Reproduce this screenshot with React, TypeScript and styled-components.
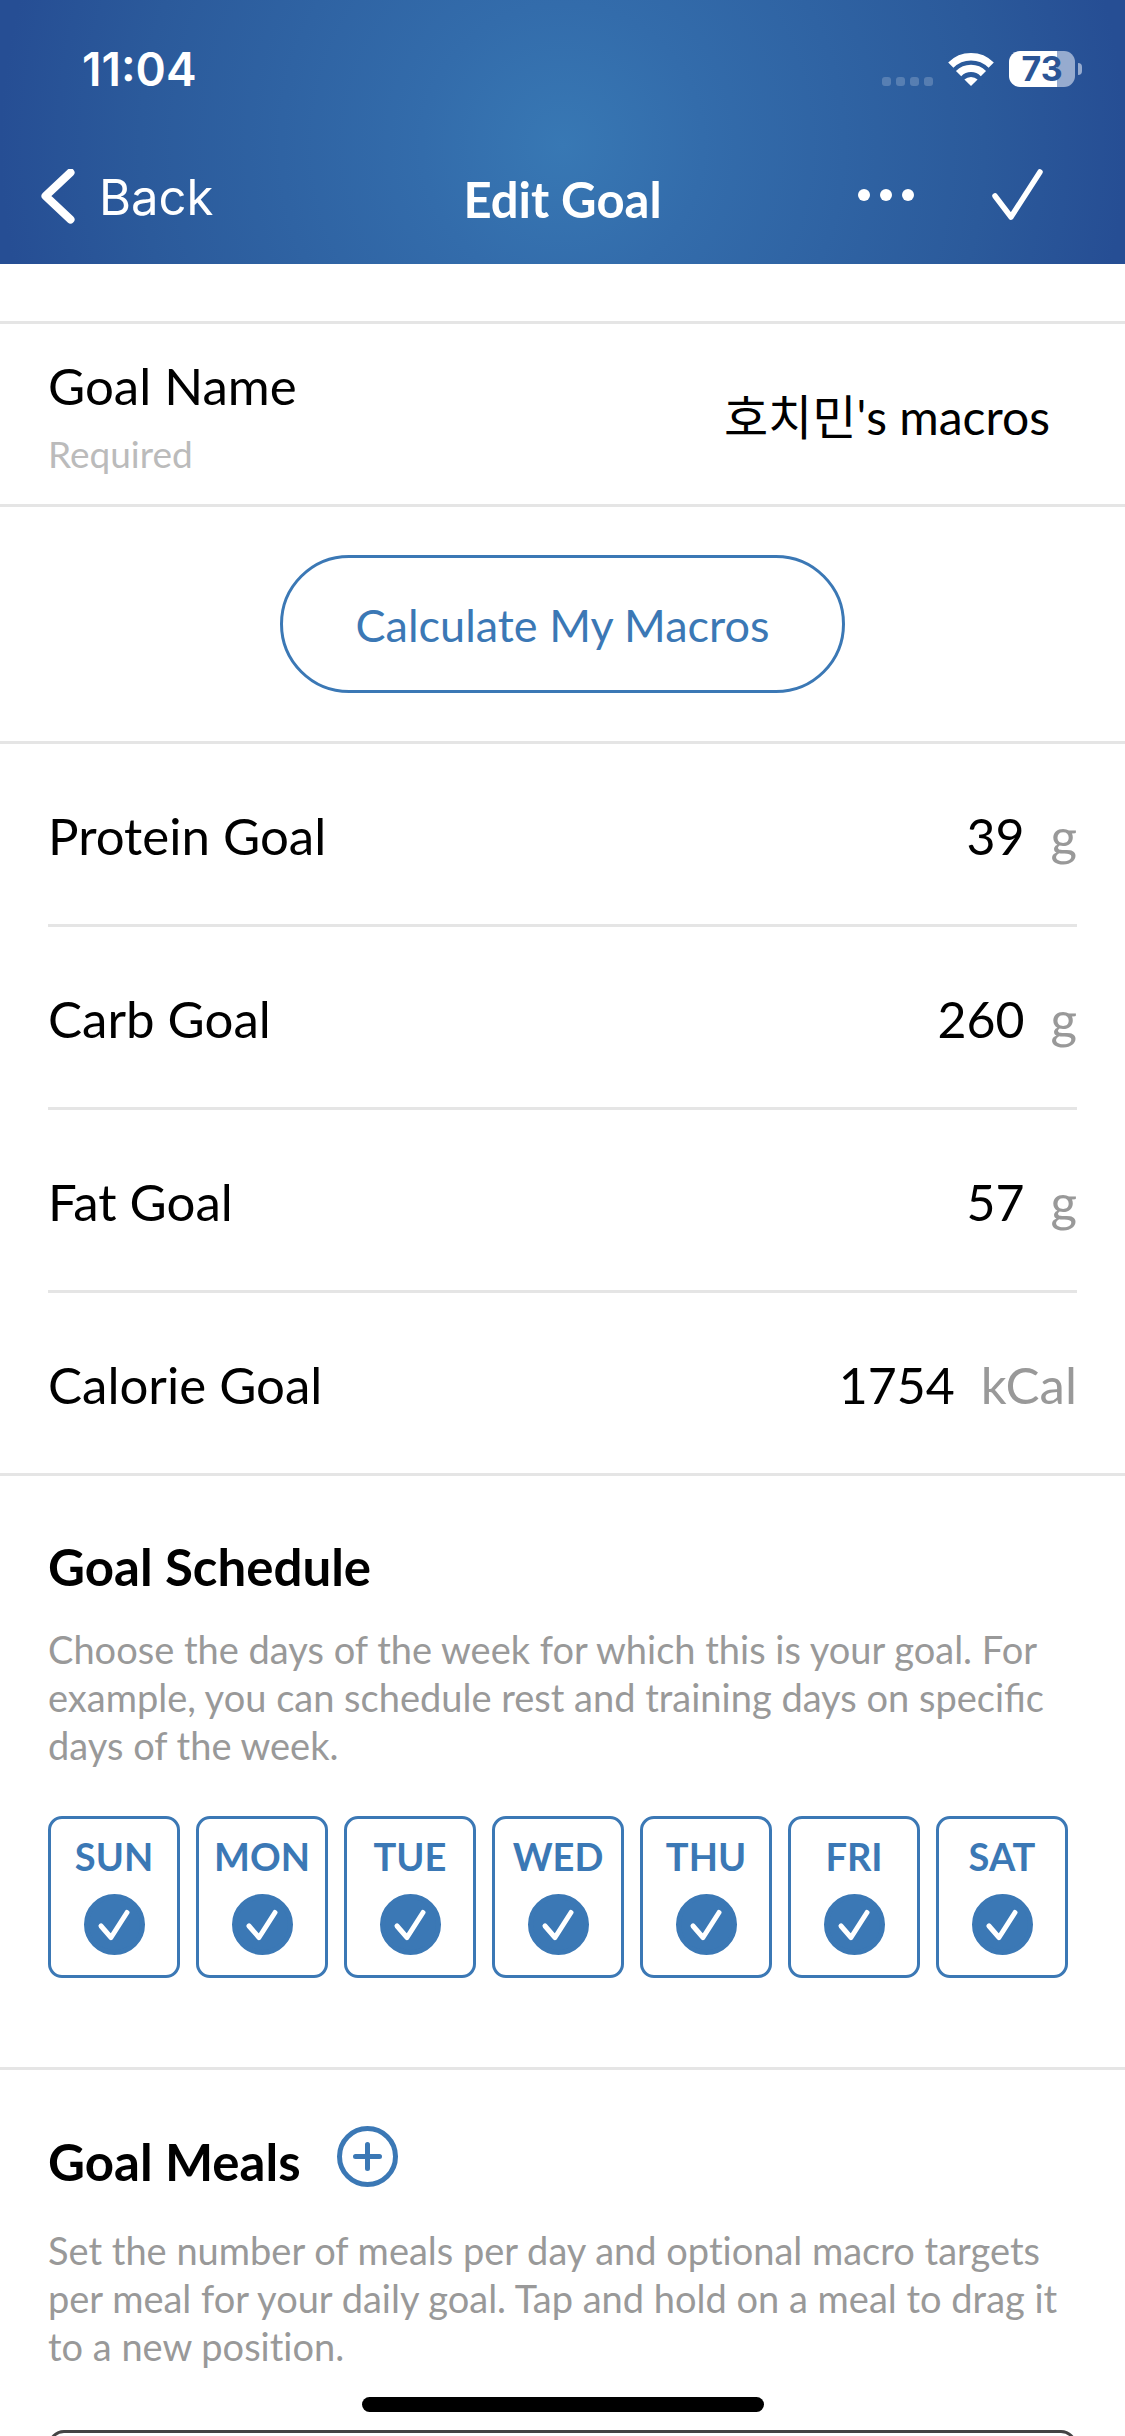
import React, { useState } from "react";
import styled, { createGlobalStyle } from "styled-components";

const blue = "#3b78b5";
const line = "#e5e5e5";
const gray = "#999999";

const GlobalStyle = createGlobalStyle`
  *, *::before, *::after { box-sizing: border-box; }
  body {
    margin: 0;
    background: #ffffff;
    color: #000000;
    font-family: Lato, "Noto Sans CJK KR", sans-serif;
    font-size: 51px;
    line-height: 60px;
  }
  button, input { font: inherit; color: inherit; margin: 0; padding: 0; border: 0; background: none; }
  h1, h2, p { margin: 0; }
`;

const Screen = styled.div`
  display: flex;
  flex-direction: column;
  height: 100vh;
  overflow: hidden;
`;

const Header = styled.header`
  flex: none;
  color: #ffffff;
  background: radial-gradient(
    circle farthest-side at 50% 55%,
    #3878b4 0%,
    #336cab 25%,
    #2f63a3 50%,
    #2b5a9b 75%,
    #264e94 100%
  );
`;

const StatusBar = styled.div`
  display: flex;
  align-items: center;
  justify-content: space-between;
  height: 132px;
  padding: 6px 43px 0 82px;
`;

const Time = styled.span`
  font-family: Inter, sans-serif;
  font-size: 46px;
  font-weight: 600;
`;

const StatusIcons = styled.div`
  display: flex;
  align-items: center;
`;

const CellDots = styled.svg`
  width: 51px;
  height: 33px;
  margin-right: 15px;
`;

const Wifi = styled.svg`
  width: 46px;
  height: 33px;
  margin-right: 15px;
`;

const Battery = styled.div`
  display: flex;
  align-items: center;
  gap: 3px;
`;

const BatteryBody = styled.div<{ $level: number }>`
  width: 66px;
  height: 36px;
  border-radius: 11px;
  background: linear-gradient(to right, #ffffff ${(p) => p.$level}%, #96abcf ${(p) => p.$level}%);
  color: #2b5596;
  font-family: Inter, sans-serif;
  font-size: 34px;
  font-weight: 700;
  line-height: 36px;
  text-align: center;
`;

const BatteryTip = styled.div`
  width: 4px;
  height: 12px;
  border-radius: 0 4px 4px 0;
  background: #96abcf;
`;

const NavBar = styled.nav`
  display: grid;
  grid-template-columns: 1fr auto 1fr;
  align-items: center;
  height: 132px;
  padding: 0 80px 0 40px;
`;

const NavTitle = styled.h1`
  padding: 2px 0 0 40px;
  font-size: 49px;
  font-weight: 700;
`;

const BackButton = styled.button`
  display: flex;
  align-items: center;
  justify-self: start;
  gap: 23px;
  font-family: Inter, sans-serif;
  font-size: 49px;
  font-weight: 400;
`;

const BackIcon = styled.svg`
  width: 36px;
  height: 58px;
`;

const NavActions = styled.div`
  display: flex;
  align-items: center;
  justify-self: end;
  gap: 76px;
  padding-bottom: 6px;
`;

const IconButton = styled.button`
  display: flex;
`;

const MoreIcon = styled.svg`
  width: 58px;
  height: 14px;
`;

const DoneIcon = styled.svg`
  width: 54px;
  height: 54px;
`;

const Content = styled.main`
  flex: 1;
  min-height: 0;
  overflow: hidden;
  padding-top: 57px;
`;

const NameRow = styled.section`
  display: flex;
  align-items: center;
  height: 186px;
  padding: 0 75px 0 48px;
  border-top: 3px solid ${line};
  border-bottom: 3px solid ${line};
`;

const NameLabel = styled.label`
  display: flex;
  flex-direction: column;
  gap: 16px;
  padding-top: 3px;
`;

const Required = styled.small`
  color: #bbbbbb;
  font-size: 37px;
  line-height: 44px;
`;

const TextInput = styled.input`
  flex: 1;
  min-width: 0;
  height: 72px;
  text-align: right;
  outline: none;
`;

const NameInput = styled(TextInput)`
  font-size: 48px;
`;

const CalculateRow = styled.section`
  display: flex;
  justify-content: center;
  padding: 48px;
  border-bottom: 3px solid ${line};
`;

const PillButton = styled.button`
  height: 138px;
  padding: 2px 73px 0;
  border: 3px solid ${blue};
  border-radius: 69px;
  color: ${blue};
  font-size: 45px;
`;

const GoalList = styled.section`
  padding: 0 48px;
  border-bottom: 3px solid ${line};
`;

const GoalRow = styled.div`
  display: flex;
  align-items: center;
  height: 183px;
  padding-top: 4px;
  border-bottom: 3px solid ${line};

  &:last-child {
    height: 180px;
    border-bottom: 0;
  }
`;

const GoalInput = styled(TextInput)`
  font-size: 50px;
`;

const Unit = styled.span`
  margin-left: 26px;
  color: ${gray};
`;

const Schedule = styled.section`
  padding: 61px 48px 89px;
  border-bottom: 3px solid ${line};
`;

const Meals = styled.section`
  padding: 56px 48px 0;
`;

const SectionTitle = styled.h2`
  font-size: 51px;
  font-weight: 700;
`;

const Hint = styled.p<{ $gap: number; $ligatures?: boolean }>`
  margin-top: ${(p) => p.$gap}px;
  color: ${gray};
  font-size: 38px;
  line-height: 48px;
  font-variant-ligatures: ${(p) => (p.$ligatures ? "normal" : "none")};
`;

const Days = styled.div`
  display: flex;
  gap: 16px;
  margin-top: 47px;
`;

const Day = styled.label`
  display: flex;
  flex-direction: column;
  align-items: center;
  justify-content: space-between;
  width: 132px;
  height: 162px;
  padding: 13px 0 20px;
  border: 3px solid ${blue};
  border-radius: 14px;
  color: ${blue};
  font-size: 38px;
  font-weight: 700;
  line-height: 48px;
`;

const Tick = styled.span`
  display: grid;
  width: 61px;
  height: 61px;

  > * { grid-area: 1 / 1; }
`;

const TickBox = styled.input`
  width: 61px;
  height: 61px;
  border: 5px solid ${blue};
  border-radius: 50%;
  appearance: none;

  &:checked { background: ${blue}; }
`;

const TickMark = styled.svg`
  width: 61px;
  height: 61px;
  pointer-events: none;
`;

const MealsHead = styled.div`
  display: flex;
  align-items: flex-end;
  gap: 36px;
  height: 66px;
`;

const AddButton = styled.button`
  display: flex;
  align-self: flex-start;
`;

const AddIcon = styled.svg`
  width: 61px;
  height: 61px;
`;

const MealCard = styled.div`
  height: 180px;
  margin-top: 60px;
  border: 3px solid #444444;
  border-radius: 16px;
`;

const HomeIndicator = styled.div`
  position: fixed;
  bottom: 24px;
  left: 50%;
  width: 402px;
  height: 15px;
  margin-left: -201px;
  border-radius: 8px;
  background: #000000;
`;

const goals = [
  { id: "protein", label: "Protein Goal", value: "39", unit: "g" },
  { id: "carb", label: "Carb Goal", value: "260", unit: "g" },
  { id: "fat", label: "Fat Goal", value: "57", unit: "g" },
  { id: "calorie", label: "Calorie Goal", value: "1754", unit: "kCal" },
];

const days = ["SUN", "MON", "TUE", "WED", "THU", "FRI", "SAT"];

function DayToggle({ name }: { name: string }) {
  const [on, setOn] = useState(true);
  return (
    <Day>
      {name}
      <Tick>
        <TickBox type="checkbox" checked={on} onChange={() => setOn(!on)} />
        {on && (
          <TickMark viewBox="0 0 61 61" fill="none" stroke="#fff" strokeWidth="5" strokeLinecap="round" strokeLinejoin="round">
            <path d="M17 32 L27 43.5 L43 18.5" />
          </TickMark>
        )}
      </Tick>
    </Day>
  );
}

export default function App() {
  return (
    <Screen>
      <GlobalStyle />
      <Header>
        <StatusBar>
          <Time>11:04</Time>
          <StatusIcons>
            <CellDots viewBox="0 0 51 33" fill="#fff" fillOpacity="0.2">
              <rect x="0" y="24" width="9" height="9" rx="3" />
              <rect x="14" y="24" width="9" height="9" rx="3" />
              <rect x="28" y="24" width="9" height="9" rx="3" />
              <rect x="42" y="24" width="9" height="9" rx="3" />
            </CellDots>
            <Wifi viewBox="0 0 46 33" fill="none" stroke="#fff" strokeWidth="7.4">
              <path d="M2.8 12.2 A28.5 28.5 0 0 1 43.2 12.2" />
              <path d="M10.6 20.6 A17.4 17.4 0 0 1 35.4 20.6" />
              <path d="M23 33 L16.4 26.6 A9.4 9.4 0 0 1 29.6 26.6 Z" fill="#fff" stroke="none" />
            </Wifi>
            <Battery>
              <BatteryBody $level={73}>73</BatteryBody>
              <BatteryTip />
            </Battery>
          </StatusIcons>
        </StatusBar>
        <NavBar>
          <BackButton type="button">
            <BackIcon viewBox="0 0 36 58" fill="none" stroke="#fff" strokeWidth="8" strokeLinecap="round" strokeLinejoin="round">
              <path d="M30.5 3.5 L5.5 27 L30.5 50.5" />
            </BackIcon>
            Back
          </BackButton>
          <NavTitle>Edit Goal</NavTitle>
          <NavActions>
            <IconButton type="button" aria-label="More">
              <MoreIcon viewBox="0 0 58 14" fill="#fff">
                <circle cx="7" cy="7" r="6" />
                <circle cx="29" cy="7" r="6" />
                <circle cx="51" cy="7" r="6" />
              </MoreIcon>
            </IconButton>
            <IconButton type="button" aria-label="Save">
              <DoneIcon viewBox="0 0 54 54" fill="none" stroke="#fff" strokeWidth="5.5" strokeLinecap="round" strokeLinejoin="round">
                <path d="M4 28 L20 49 L49 4" />
              </DoneIcon>
            </IconButton>
          </NavActions>
        </NavBar>
      </Header>

      <Content>
        <NameRow>
          <NameLabel htmlFor="goal-name">
            Goal Name
            <Required>Required</Required>
          </NameLabel>
          <NameInput id="goal-name" defaultValue="호치민's macros" />
        </NameRow>

        <CalculateRow>
          <PillButton type="button">Calculate My Macros</PillButton>
        </CalculateRow>

        <GoalList>
          {goals.map((g) => (
            <GoalRow key={g.id}>
              <label htmlFor={g.id}>{g.label}</label>
              <GoalInput id={g.id} inputMode="numeric" defaultValue={g.value} />
              <Unit>{g.unit}</Unit>
            </GoalRow>
          ))}
        </GoalList>

        <Schedule>
          <SectionTitle>Goal Schedule</SectionTitle>
          <Hint $gap={28} $ligatures>
            Choose the days of the week for which this is your goal. For example, you can schedule
            rest and training days on specific days of the week.
          </Hint>
          <Days>
            {days.map((d) => (
              <DayToggle key={d} name={d} />
            ))}
          </Days>
        </Schedule>

        <Meals>
          <MealsHead>
            <SectionTitle>Goal Meals</SectionTitle>
            <AddButton type="button" aria-label="Add meal">
              <AddIcon viewBox="0 0 61 61" fill="none" stroke={blue} strokeWidth="5" strokeLinecap="round">
                <circle cx="30.5" cy="30.5" r="28" />
                <path d="M30.5 18.5 V42.5 M18.5 30.5 H42.5" />
              </AddIcon>
            </AddButton>
          </MealsHead>
          <Hint $gap={34}>
            Set the number of meals per day and optional macro targets per meal for your daily goal.
            Tap and hold on a meal to drag it to a new position.
          </Hint>
          <MealCard />
        </Meals>
      </Content>
      <HomeIndicator />
    </Screen>
  );
}
